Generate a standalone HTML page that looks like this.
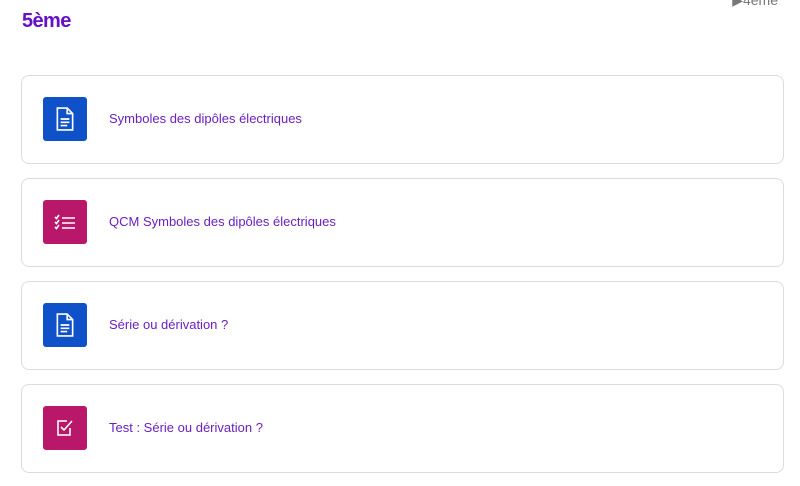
<!DOCTYPE html>
<html><head><meta charset="utf-8"><style>
body{margin:0;width:800px;height:486px;overflow:hidden;background:#fff;font-family:"Liberation Sans",sans-serif;position:relative}
h1{position:absolute;left:22px;top:10px;margin:0;font-size:20px;font-weight:bold;color:#6610c8;letter-spacing:-0.6px}
.nav{position:absolute;right:22px;top:-8px;font-size:14px;color:#777}
.card{position:absolute;left:21px;width:763px;height:89px;border:1px solid #dcdcdc;border-radius:8px;box-sizing:border-box}
.ic{position:absolute;left:21px;top:21px;width:44px;height:44px;border-radius:3px;display:flex;align-items:center;justify-content:center}
.b{background:#0f51c9}.m{background:#b8176a}
.t{position:absolute;left:87px;top:35px;font-size:13px;color:#6a1fc2}
</style></head><body>
<h1>5ème</h1>
<div class="nav">▶4ème</div>
<div class="card" style="top:75px"><div class="ic b"><svg width="22" height="24" viewBox="0 0 20 22" fill="none" stroke="#fff" stroke-width="1.5"><path d="M3 1h9l5 5v15H3z M12 1v5h5"/><path d="M6 11h8M6 14h8M6 17h6"/></svg></div><div class="t">Symboles des dipôles électriques</div></div>
<div class="card" style="top:178px"><div class="ic m"><svg width="22" height="16" viewBox="0 0 22 16" fill="none" stroke="#fff" stroke-width="1.6"><path d="M1 3l1.5 1.5L5 1M1 8l1.5 1.5L5 6M1 13l1.5 1.5L5 11"/><path d="M8 4h13M8 9h13M8 14h13"/></svg></div><div class="t">QCM Symboles des dipôles électriques</div></div>
<div class="card" style="top:281px"><div class="ic b"><svg width="22" height="24" viewBox="0 0 20 22" fill="none" stroke="#fff" stroke-width="1.5"><path d="M3 1h9l5 5v15H3z M12 1v5h5"/><path d="M6 11h8M6 14h8M6 17h6"/></svg></div><div class="t">Série ou dérivation ?</div></div>
<div class="card" style="top:384px"><div class="ic m"><svg width="18" height="18" viewBox="0 0 18 18" fill="none" stroke="#fff" stroke-width="1.6"><path d="M14 9v7H2V2h9"/><path d="M5 8l3 3 8-9"/></svg></div><div class="t">Test : Série ou dérivation ?</div></div>
</body></html>
